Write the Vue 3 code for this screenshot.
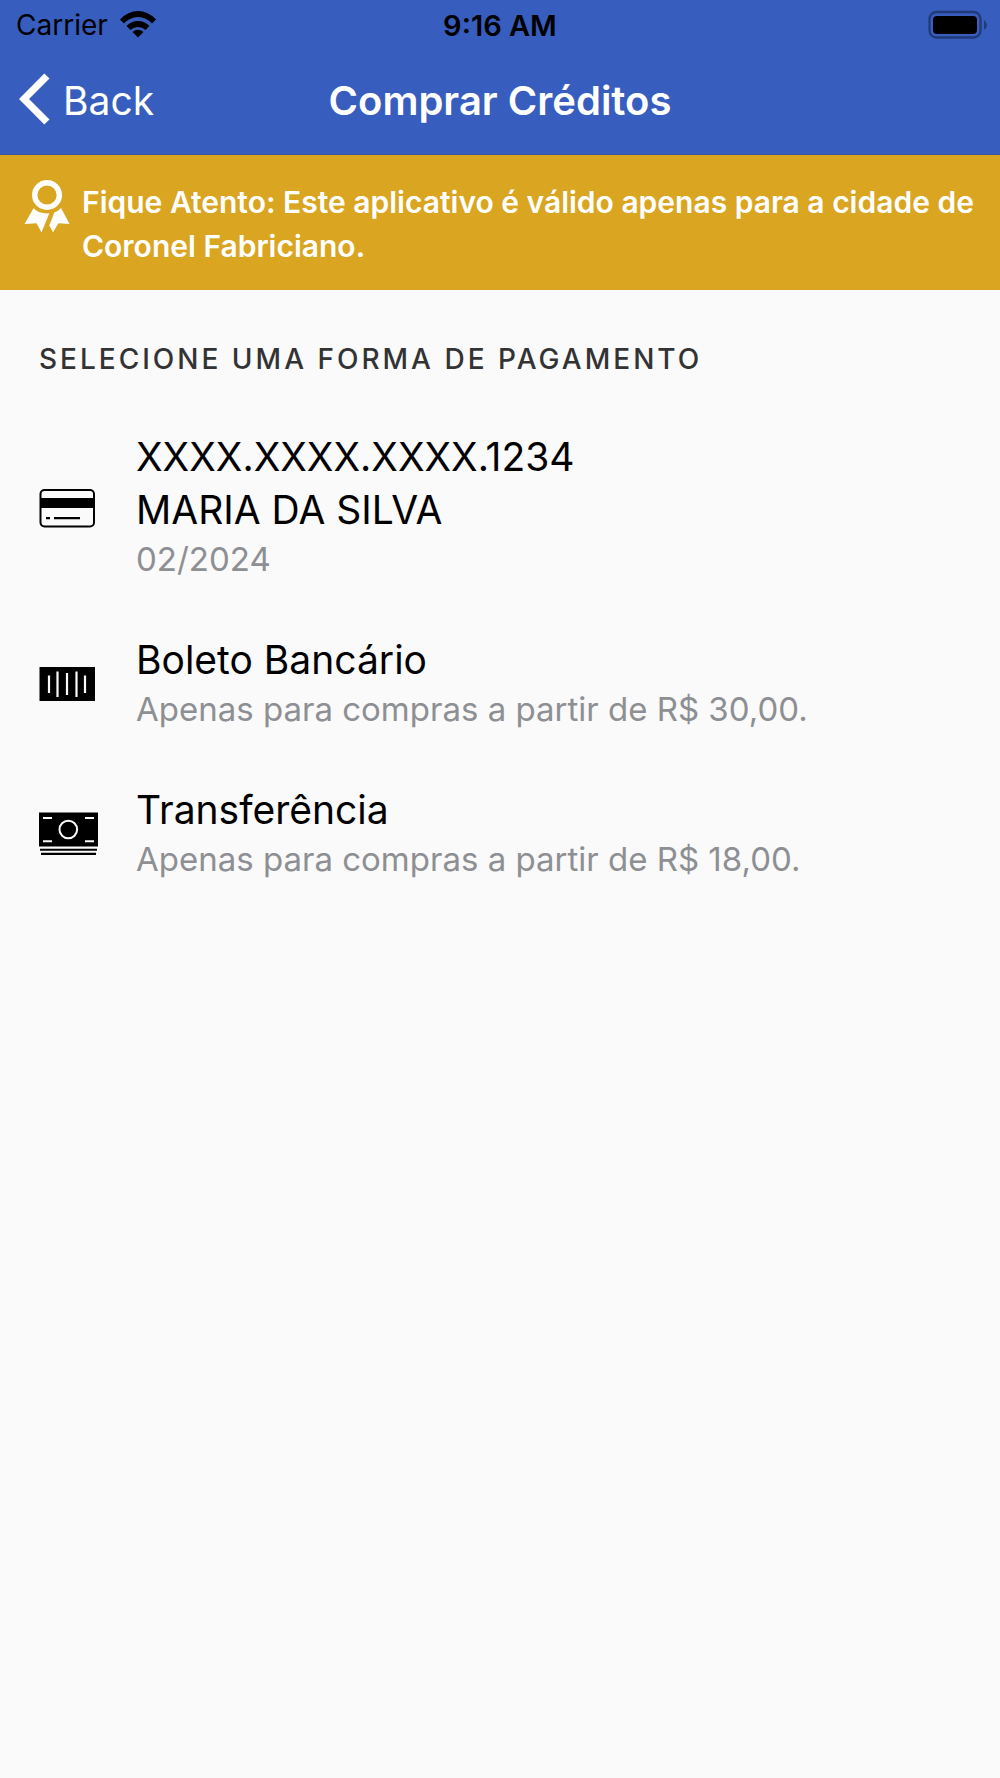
<script setup>
const methods = [
  { id: 'card', lines: ['XXXX.XXXX.XXXX.1234', 'MARIA DA SILVA'], note: '02/2024' },
  { id: 'boleto', lines: ['Boleto Bancário'], note: 'Apenas para compras a partir de R$ 30,00.' },
  { id: 'transfer', lines: ['Transferência'], note: 'Apenas para compras a partir de R$ 18,00.' },
]
</script>

<template>
  <div class="screen">
    <header class="top">
      <div class="status">
        <div class="carrier">
          <span>Carrier</span>
          <svg width="38" height="28" viewBox="0 0 38 28" aria-hidden="true">
            <path d="M1 9.500Q9 1 19 1T37 9.500L33 13.500Q27 7 19 7T5 13.500Z" />
            <path d="M7.500 16Q12.500 11 19 11T30.500 16L26.500 20Q23 17 19 17T11.500 20Z" />
            <path d="M13.500 22Q16 19.800 19 19.800T24.500 22L19 27.500Z" />
          </svg>
        </div>
        <time>9:16 AM</time>
        <svg class="battery" width="60" height="30" viewBox="0 0 60 30" aria-hidden="true">
          <rect x="1.500" y="2" width="51" height="25.500" rx="7" fill="none" stroke="#213b79" stroke-width="2.300" />
          <rect x="5" y="6" width="44" height="18" rx="4" />
          <path d="M56 10Q59 12 59 15T56 20Z" fill="#213b79" />
        </svg>
      </div>
      <nav class="bar">
        <button class="back" type="button">
          <svg width="32" height="52" viewBox="0 0 32 52" aria-hidden="true">
            <path d="M26.300.500 31.500 5.500 11 26 31.500 46.500 26.300 51.500 1 26Z" />
          </svg>
          <span>Back</span>
        </button>
        <h1>Comprar Créditos</h1>
      </nav>
    </header>

    <div class="notice" role="note">
      <svg width="46" height="54" viewBox="0 1 46 54" aria-hidden="true">
        <circle cx="23" cy="16" r="12.300" fill="none" stroke="#fff" stroke-width="5.400" />
        <path d="M9.500 29.200Q15.500 35 25.300 34.300L17.500 53.500 12.500 44.300.500 45Z" />
        <path d="M37 29 45.600 45 34.500 44.200 29 53.300 25.300 46.500 30.300 33.600Q34 32.300 37 29Z" />
      </svg>
      <p>Fique Atento: Este aplicativo é válido apenas para a cidade de Coronel Fabriciano.</p>
    </div>

    <main>
      <h2>Selecione uma forma de pagamento</h2>
      <ul>
        <li v-for="m in methods" :key="m.id">
          <button class="method" type="button">
            <svg v-if="m.id === 'card'" width="60" height="50" viewBox="0 0 60 50" aria-hidden="true">
              <rect x="2.500" y="8" width="53.500" height="36.500" rx="4" fill="none" stroke="#000" stroke-width="2" />
              <path d="M2 16H56V26H2ZM8 35H12V37.200H8ZM16 35H42V37.200H16Z" />
            </svg>
            <svg v-else-if="m.id === 'boleto'" width="60" height="50" viewBox="0 0 60 50" aria-hidden="true">
              <path d="M1.500 9H57V43H1.500Z" />
              <path d="M11 17.500V35M19.500 13.500V39M29 15V37M38.500 13.500V39M47 17.500V35" fill="none" stroke="#fafafa" stroke-width="2.200" />
            </svg>
            <svg v-else width="60" height="50" viewBox="0 0 60 50" aria-hidden="true">
              <path d="M1 4.500H60V38.500H1ZM2 40.700H59V42.700H2ZM3 44.700H58V47H3Z" />
              <path d="M5 10H14M47 10H56M5 33.300H14M47 33.300H56" fill="none" stroke="#fafafa" stroke-width="2" />
              <circle cx="30.300" cy="21.500" r="8.800" fill="none" stroke="#fafafa" stroke-width="2" />
            </svg>
            <span class="text">
              <span v-for="line in m.lines" :key="line" class="line">{{ line }}</span>
              <span class="note">{{ m.note }}</span>
            </span>
          </button>
        </li>
      </ul>
    </main>
  </div>
</template>

<style>
body {
  background: #fafafa;
}
</style>

<style scoped>
.screen {
  font-family: Inter, "Liberation Sans", sans-serif;
  color: #000;
}
svg {
  display: block;
  flex: none;
}
h1, h2, p, ul {
  margin: 0;
  padding: 0;
}
button {
  border: 0;
  padding: 0;
  background: none;
  font: inherit;
  color: inherit;
  text-align: left;
}
.top {
  background: #375dbe;
  border-bottom: 1px solid #37559f;
}
.status {
  display: grid;
  grid-template-columns: 1fr auto 1fr;
  align-items: center;
  height: 50px;
  padding: 0 12px;
  font-size: 28px;
}
.carrier {
  display: flex;
  align-items: center;
  gap: 11px;
  padding-left: 4px;
}
.carrier svg {
  margin-bottom: 2px;
}
time {
  font-size: 29px;
  font-weight: 600;
}
.battery {
  justify-self: end;
}
.bar {
  display: grid;
  grid-template-columns: 1fr auto 1fr;
  align-items: center;
  height: 100px;
  padding: 0 18px 4px;
  color: #fff;
}
.back {
  display: flex;
  align-items: center;
  gap: 13px;
  font-size: 39px;
}
.back svg {
  fill: #fff;
  margin-bottom: 3px;
}
h1 {
  font-size: 40px;
  font-weight: 600;
}
.notice {
  display: flex;
  gap: 12px;
  padding: 25px 20px 22px 24px;
  background: #daa520;
  color: #fff;
}
.notice svg {
  fill: #fff;
}
.notice p {
  font-size: 30px;
  line-height: 44px;
  font-weight: 600;
}
h2 {
  padding: 47px 39px 24px;
  font-size: 28px;
  line-height: 44px;
  font-weight: 500;
  letter-spacing: 3px;
  text-transform: uppercase;
  color: #333;
}
ul {
  list-style: none;
}
.method {
  display: grid;
  grid-template-columns: 60px 1fr;
  align-items: center;
  column-gap: 38px;
  width: 100%;
  padding: 25px 38px;
}
.text {
  display: flex;
  flex-direction: column;
}
.line {
  font-size: 39px;
  line-height: 53px;
}
.note {
  font-size: 33px;
  line-height: 47px;
  color: #8e8f93;
}
</style>
